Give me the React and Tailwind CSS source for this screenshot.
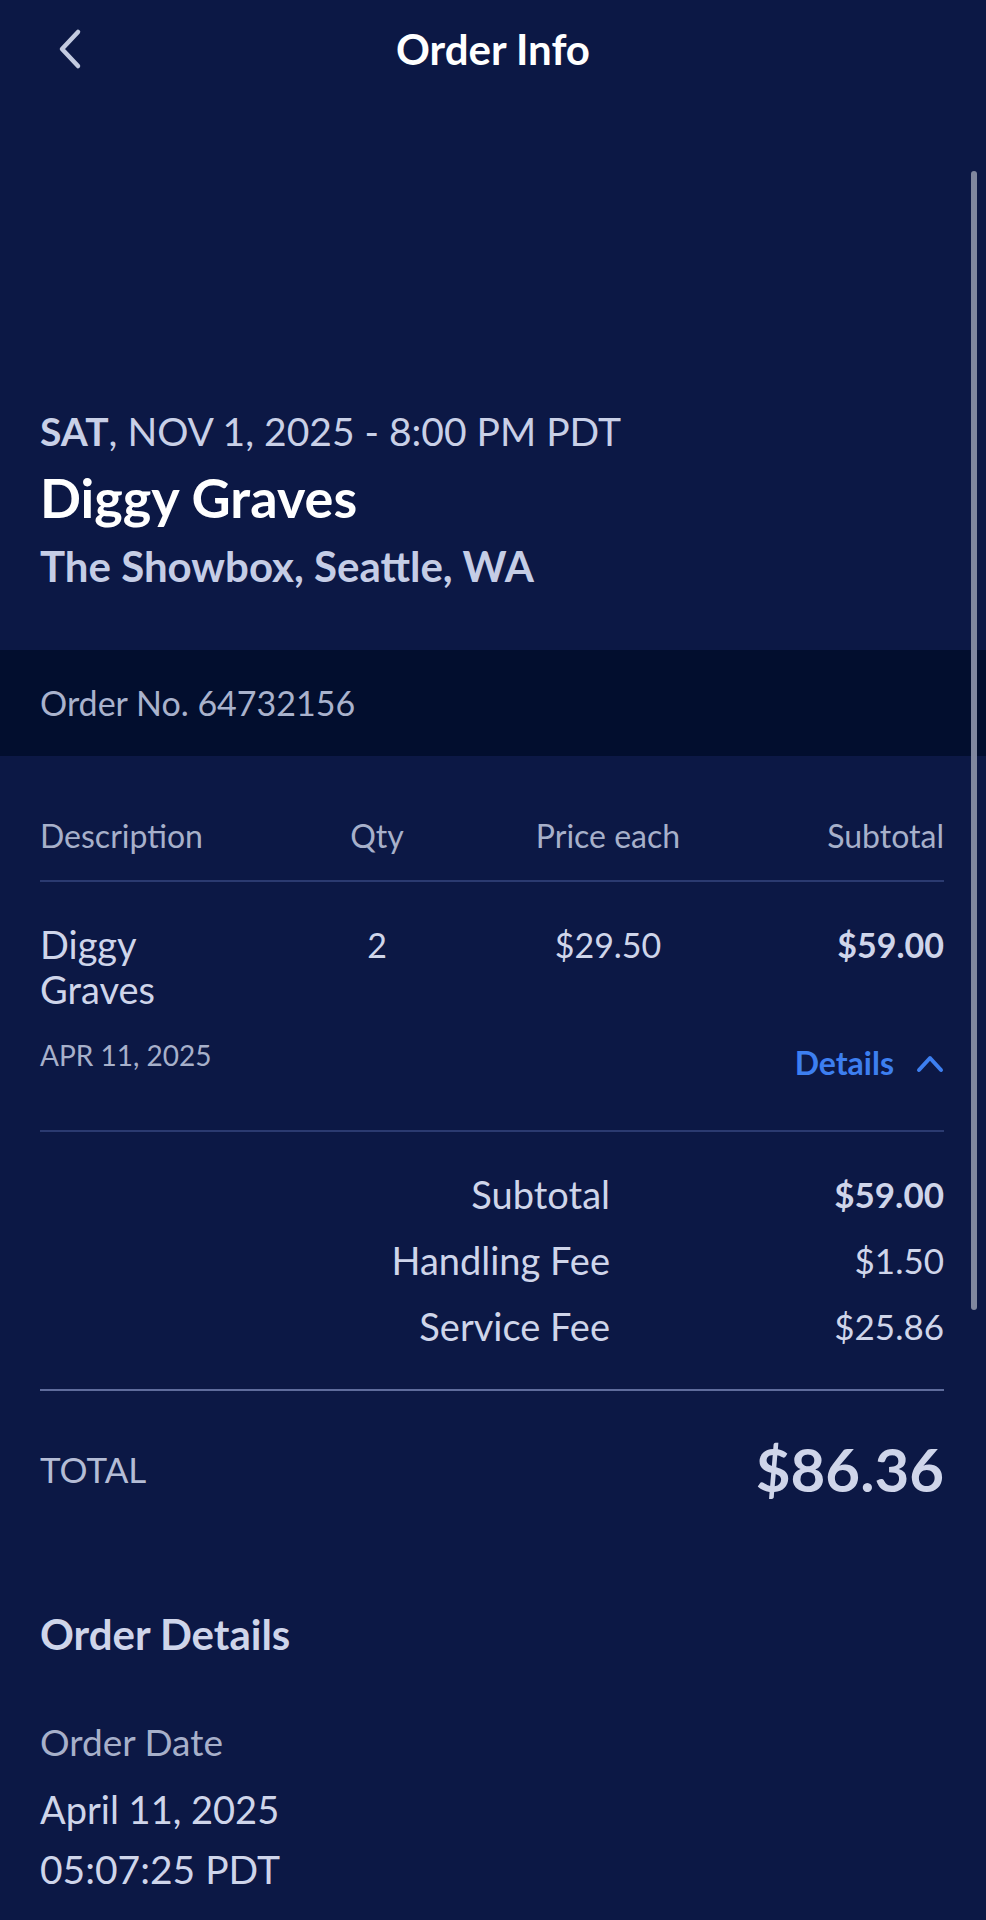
import React from 'react'

const BackChevron = () => (
    <svg width="30" height="42" viewBox="0 0 30 42" fill="none">
        <polyline
            points="23,4 7,21 23,38"
            stroke="#c3cae0"
            strokeWidth="4.5"
            strokeLinecap="round"
            strokeLinejoin="round"
        />
    </svg>
)

const UpChevron = () => (
    <svg width="28" height="20" viewBox="0 0 28 20" fill="none">
        <polyline
            points="3,17 14,5 25,17"
            stroke="#3d7ff0"
            strokeWidth="4"
            strokeLinecap="round"
            strokeLinejoin="round"
        />
    </svg>
)

const lineItems = [
    { label: 'Subtotal', value: '$59.00', bold: true },
    { label: 'Handling Fee', value: '$1.50' },
    { label: 'Service Fee', value: '$25.86' },
]

export default function App() {
    return (
        <div className="relative min-h-[1920px] w-full bg-[#0c1845] font-['Lato','Noto_Sans',sans-serif] text-[#cfd5ea]">
            {/* scroll indicator */}
            <div className="absolute right-[9px] top-[171px] h-[1139px] w-[6px] rounded-full bg-[#80879f]" />

            {/* top bar */}
            <header className="grid h-[98px] grid-cols-[1fr_auto_1fr] items-center px-[55px]">
                <div className="flex items-center">
                    <BackChevron />
                </div>
                <h1 className="text-[42px] font-bold leading-[48px] text-white">
                    Order Info
                </h1>
                <div />
            </header>

            {/* event */}
            <section className="px-[40px] pb-[59px] pt-[309px]">
                <p className="text-[39px] leading-[48px] text-[#c9d0e7]">
                    <span className="font-bold">SAT</span>, NOV 1, 2025 - 8:00 PM PDT
                </p>
                <h2 className="mt-[13px] text-[54px] font-bold leading-[60px] text-white">
                    Diggy Graves
                </h2>
                <p className="mt-[13px] text-[42px] font-bold leading-[50px] text-[#c5cde6]">
                    The Showbox, Seattle, WA
                </p>
            </section>

            <div className="flex h-[106px] items-center bg-[#020e2e] px-[40px]">
                <span className="text-[34px] leading-[40px] text-[#a9b2cc]">
                    Order No. 64732156
                </span>
            </div>

            <section className="mr-[42px] ml-[40px]">
                {/* table head */}
                <div className="grid grid-cols-[250px_174px_288px_1fr] pb-[24px] pt-[60px] text-[32px] leading-[40px] text-[#a7b0ca]">
                    <span>Description</span>
                    <span className="text-center">Qty</span>
                    <span className="text-center">Price each</span>
                    <span className="text-right">Subtotal</span>
                </div>
                <div className="h-[2px] bg-[#2b3a70]" />

                {/* row */}
                <div className="pb-[49px] pt-[40px]">
                    <div className="grid grid-cols-[250px_174px_288px_1fr] items-start text-[34px] leading-[45px]">
                        <span className="max-w-[150px] text-[38px]">Diggy Graves</span>
                        <span className="text-center">2</span>
                        <span className="text-center">$29.50</span>
                        <span className="text-right font-bold">$59.00</span>
                    </div>
                    <div className="mt-[25px] flex items-start justify-between">
                        <span className="text-[28px] leading-[36px] text-[#a7b0ca]">
                            APR 11, 2025
                        </span>
                        <button className="mt-[8px] flex items-center gap-[22px] text-[32px] font-bold leading-[36px] text-[#3d7ff0]">
                            Details
                            <UpChevron />
                        </button>
                    </div>
                </div>
                <div className="h-[2px] bg-[#2b3a70]" />

                {/* fees */}
                <div className="pb-[30px] pt-[29px]">
                    {lineItems.map((item) => (
                        <div
                            key={item.label}
                            className="grid h-[66px] grid-cols-[570px_1fr] items-center leading-[44px]"
                        >
                            <span className="text-right text-[38px]">{item.label}</span>
                            <span className={`text-right text-[35px] ${item.bold ? 'font-bold' : ''}`}>
                                {item.value}
                            </span>
                        </div>
                    ))}
                </div>
                <div className="h-[2px] bg-[#5f6c9c]" />

                <div className="mt-[43px] flex h-[70px] items-center justify-between">
                    <span className="text-[35px] leading-[40px] text-[#b4bcd5]">TOTAL</span>
                    <span className="text-[60px] font-bold leading-[70px]">$86.36</span>
                </div>

                {/* order details */}
                <h3 className="mt-[105px] text-[42px] font-bold leading-[50px]">
                    Order Details
                </h3>
                <p className="mt-[61px] text-[37px] leading-[44px] text-[#a7b0ca]">
                    Order Date
                </p>
                <p className="mt-[15px] text-[38px] leading-[60px]">April 11, 2025</p>
                <p className="text-[39px] leading-[60px]">05:07:25 PDT</p>
            </section>
        </div>
    )
}
